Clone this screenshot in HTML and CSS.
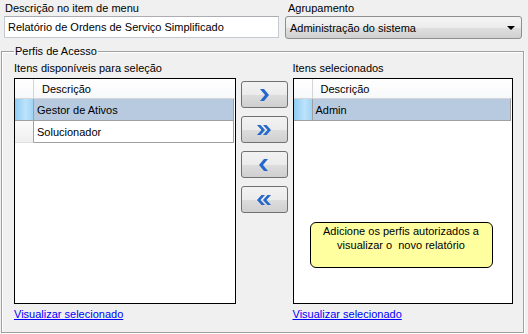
FILE: index.html
```html
<!DOCTYPE html>
<html>
   <head>
      <title>Perfis de Acesso</title>
      <meta name="viewport" content="width=device-width, initial-scale=1">
      <link rel="stylesheet" href="styles.css">
   </head>
   <body>
      <div class="top-row">
         <div class="field field-desc">
            <label class="field-label">Descrição no item de menu</label>
            <input class="text-input" type="text" value="Relatório de Ordens de Serviço Simplificado">
         </div>
         <div class="field field-group">
            <label class="field-label">Agrupamento</label>
            <div class="select-box">
               <span>Administração do sistema</span>
               <span class="select-arrow"></span>
            </div>
         </div>
      </div>

      <fieldset class="group-box">
         <legend>Perfis de Acesso</legend>
         <div class="lists">
            <div class="list-col">
               <div class="list-label">Itens disponíveis para seleção</div>
               <div class="grid">
                  <div class="grid-row grid-head">
                     <div class="row-head"></div>
                     <div class="cell">Descrição</div>
                  </div>
                  <div class="grid-row selected">
                     <div class="row-head"></div>
                     <div class="cell">Gestor de Ativos</div>
                  </div>
                  <div class="grid-row">
                     <div class="row-head"></div>
                     <div class="cell">Solucionador</div>
                  </div>
               </div>
               <a href="#" class="link">Visualizar selecionado</a>
            </div>

            <div class="buttons">
               <button class="move-button">
                  <svg width="12" height="14" viewBox="0 0 12 14"><polygon points="2,1 6,1 11,7 6,13 2,13 7,7" fill="#2468cc"/></svg>
               </button>
               <button class="move-button">
                  <svg width="16" height="14" viewBox="0 0 16 14"><polygon points="1,2 4.5,2 9,7 4.5,12 1,12 5.5,7" fill="#2468cc"/><polygon points="7,2 10.5,2 15,7 10.5,12 7,12 11.5,7" fill="#2468cc"/></svg>
               </button>
               <button class="move-button">
                  <svg width="12" height="14" viewBox="0 0 12 14"><polygon points="10,1 6,1 1,7 6,13 10,13 5,7" fill="#2468cc"/></svg>
               </button>
               <button class="move-button">
                  <svg width="16" height="14" viewBox="0 0 16 14"><polygon points="15,2 11.5,2 7,7 11.5,12 15,12 10.5,7" fill="#2468cc"/><polygon points="9,2 5.5,2 1,7 5.5,12 9,12 4.5,7" fill="#2468cc"/></svg>
               </button>
            </div>

            <div class="list-col">
               <div class="list-label">Itens selecionados</div>
               <div class="grid">
                  <div class="grid-row grid-head">
                     <div class="row-head"></div>
                     <div class="cell">Descrição</div>
                  </div>
                  <div class="grid-row selected">
                     <div class="row-head"></div>
                     <div class="cell">Admin</div>
                  </div>
                  <div class="hint">Adicione os perfis autorizados a<br>visualizar o&nbsp; novo relatório</div>
               </div>
               <a href="#" class="link">Visualizar selecionado</a>
            </div>
         </div>
      </fieldset>
   </body>
</html>
```

FILE: styles.css
```css
body, html {
   margin: 0;
   width: 528px;
   height: 334px;
   overflow: hidden;
   background: #f0f0f0;
   font-family: "Liberation Sans", Arial, sans-serif;
   font-size: 11px;
   color: #000;
}

.top-row {
   display: flex;
   gap: 6px;
   padding: 2px 0 0 4px;
}

.field {
   display: flex;
   flex-direction: column;
   gap: 1px;
}

.field-desc {
   width: 275px;
}

.field-group {
   width: 237px;
}

.field-label {
   line-height: 13px;
   padding-left: 1px;
}

.field-group .field-label {
   padding-left: 3px;
}

.text-input {
   box-sizing: border-box;
   height: 22px;
   margin: 0;
   padding: 0 3px;
   border: 1px solid #c5cad2;
   border-top-color: #abadb3;
   background: #fff;
   font-family: inherit;
   font-size: 11px;
   outline: none;
}

.select-box {
   box-sizing: border-box;
   height: 23px;
   display: flex;
   align-items: center;
   justify-content: space-between;
   padding: 0 6px 0 4px;
   border: 1px solid #8e8f8f;
   border-radius: 3px;
   background: linear-gradient(#f4f4f4 0%, #ececec 50%, #dfdfdf 51%, #d0d0d0 100%);
}

.select-arrow {
   width: 0;
   height: 0;
   border-left: 4px solid transparent;
   border-right: 4px solid transparent;
   border-top: 4px solid #000;
}

.group-box {
   margin: 6px 4px 0 1px;
   padding: 4px 10px 11px 12px;
   border: 1px solid #a0a0a0;
   box-shadow: 1px 1px 0 #fff, inset 1px 1px 0 #fff;
   min-width: 0;
}

.group-box legend {
   padding: 0 1px;
   line-height: 13px;
}

.lists {
   display: flex;
   gap: 5px;
}

.list-col {
   display: flex;
   flex-direction: column;
   width: 222px;
}

.list-col:last-child {
   width: 221px;
}

.list-label {
   line-height: 13px;
   margin-bottom: 3px;
}

.grid {
   position: relative;
   box-sizing: border-box;
   height: 226px;
   border: 1px solid #000;
   background: #fff;
}

.grid-row {
   display: flex;
   height: 22px;
   margin-right: 1px;
}

.row-head {
   box-sizing: border-box;
   width: 19px;
   flex: none;
   border-right: 1px solid #a0a0a0;
   border-bottom: 1px solid #e0e0e0;
   background: linear-gradient(#fafafa, #f0f0f0);
}

.cell {
   flex: 1;
   display: flex;
   align-items: center;
   padding-left: 3px;
   border-bottom: 1px solid #a0a0a0;
   border-right: 1px solid #a0a0a0;
}

.grid-head {
   height: 20px;
   margin-right: 0;
}

.grid-head .row-head {
   border-bottom: 1px solid #d5d5d5;
   border-right: 1px solid #d5d5d5;
   background: linear-gradient(#fff, #f7f8fa);
}

.grid-head .cell {
   padding-left: 8px;
   border-right: none;
   border-bottom: 1px solid #d5d5d5;
   background: linear-gradient(#fff, #f7f8fa);
}

.selected .cell {
   background: #b8cadf;
}

.selected .row-head {
   background: linear-gradient(90deg, #8fcdf5, #bde3fb 60%, #9fd4f6);
   border-bottom-color: #a0a0a0;
}

.buttons {
   display: flex;
   flex-direction: column;
   gap: 8px;
   padding-top: 19px;
}

.move-button {
   box-sizing: border-box;
   width: 47px;
   height: 27px;
   display: flex;
   align-items: center;
   justify-content: center;
   padding: 0;
   border: 1px solid #707070;
   border-radius: 3px;
   background: linear-gradient(#f2f2f2 0%, #ebebeb 50%, #dddddd 51%, #cfcfcf 100%);
   cursor: pointer;
}

.hint {
   position: absolute;
   left: 16px;
   top: 143px;
   width: 183px;
   height: 46px;
   box-sizing: border-box;
   padding-top: 1px;
   border: 1px solid #000;
   border-radius: 6px;
   background: #ffffa0;
   text-align: center;
   line-height: 14px;
}

.link {
   margin-top: 4px;
   line-height: 13px;
   color: #0000ff;
   text-decoration: underline;
   align-self: flex-start;
}
```
